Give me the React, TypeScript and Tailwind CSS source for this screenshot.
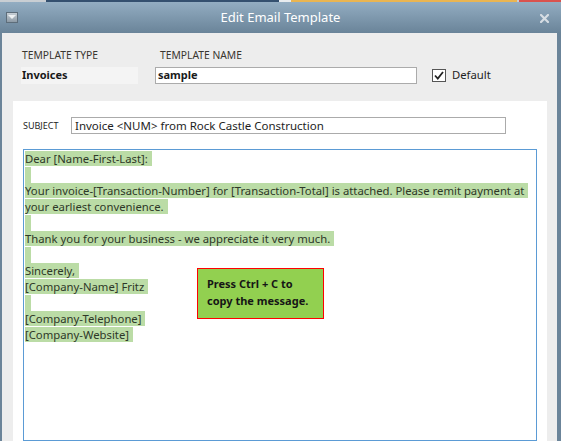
import React from 'react'

const ui = { fontFamily: '"Noto Sans", "Open Sans", Arial, sans-serif' }

// lines of the message body; '' marks an empty (highlighted newline) line
const lines = [
  'Dear [Name-First-Last]:',
  '',
  'Your invoice-[Transaction-Number] for [Transaction-Total] is attached. Please remit payment at',
  'your earliest convenience.',
  '',
  'Thank you for your business - we appreciate it very much.',
  '',
  'Sincerely,',
  '[Company-Name] Fritz',
  '',
  '[Company-Telephone]',
  '[Company-Website]',
]

export default function App() {
  return (
    <div className="flex h-[441px] w-[561px] flex-col overflow-hidden bg-[#6b8499]" style={ui}>
      {/* background app strip peeking above the dialog */}
      <div className="flex h-[2px] flex-shrink-0">
        <div className="w-[46px] bg-[#c9ced3]" />
        <div className="w-[233px] bg-[#34506f]" />
        <div className="w-[12px] bg-[#e8ecef]" />
        <div className="w-[226px] bg-[#eab552]" />
        <div className="w-[2px] bg-[#c9ced3]" />
        <div className="flex-1 bg-[#d9534f]" />
      </div>

      {/* title bar */}
      <div className="relative flex h-[31px] flex-shrink-0 items-center justify-center bg-gradient-to-b from-[#93adc2] to-[#6a8499]">
        <div className="absolute left-[6px] top-[10px] flex h-[11px] w-[12px] items-start justify-center border border-[#5d6d7a] bg-gradient-to-b from-[#c7cfd6] to-[#8d9aa5]">
          <div className="mt-[2px] h-[4px] w-[8px] bg-[#eef1f3]" style={{ clipPath: 'polygon(0 0, 100% 0, 50% 100%)' }} />
        </div>
        <span className="text-[13px] leading-none text-white">Edit Email Template</span>
        <svg className="absolute left-[540px] top-[12px]" width="9" height="9" viewBox="0 0 9 9">
          <path d="M1 1 L8 8 M8 1 L1 8" stroke="#d6dde3" strokeWidth="2.2" strokeLinecap="square" />
        </svg>
      </div>

      {/* dialog body */}
      <div className="ml-[2px] mr-[4px] flex flex-1 flex-col bg-[#ededed]">
        <div className="mt-[16px] flex h-[12px] items-center text-[10.3px] uppercase leading-none text-[#3a3630]">
          <span className="ml-[20px] w-[138px]">Template Type</span>
          <span>Template Name</span>
        </div>

        <div className="mt-[6px] flex h-[17px] items-center">
          <div className="ml-[19px] flex h-[17px] w-[117px] items-center bg-[#f4f4f4] pl-[1px] text-[11px] font-bold text-[#1a1a1a]">
            Invoices
          </div>
          <div className="ml-[17px] flex h-[17px] w-[262px] items-center border border-[#ababab] bg-white pl-[2px] text-[11px] font-bold text-[#1a1a1a]">
            sample
          </div>
          <div className="ml-[15px] flex h-[13px] w-[14px] items-center justify-center border border-[#555] bg-white">
            <svg width="10" height="9" viewBox="0 0 10 9">
              <path d="M1 4.5 L3.8 7.5 L9 1" fill="none" stroke="#222" strokeWidth="1.8" />
            </svg>
          </div>
          <span className="ml-[6px] text-[11.3px] text-[#1e1e1e]">Default</span>
        </div>

        {/* white panel */}
        <div className="ml-[11px] mt-[17px] flex w-[534px] flex-1 flex-col bg-white">
          <div className="mt-[16px] flex h-[17px] items-center">
            <span className="ml-[10px] w-[48px] text-[9px] uppercase text-[#1e1e1e]">Subject</span>
            <div className="flex h-[17px] w-[435px] items-center border border-[#ababab] pl-[3px] text-[11.5px] text-[#1e1e1e]">
              Invoice &lt;NUM&gt; from Rock Castle Construction
            </div>
          </div>

          {/* message area */}
          <div className="relative ml-[10px] mt-[15px] w-[514px] flex-1 border border-[#5b9bd5] pl-[1px] pt-[1px] text-[11.3px] leading-4 text-[#2e3828]">
            {lines.map((line, i) => (
              <div key={i} className="h-4 whitespace-nowrap">
                {line ? (
                  <span className="bg-[#bbdca6] pr-[4px]">{line}</span>
                ) : (
                  <span className="inline-block h-4 w-[6px] bg-[#bbdca6] align-top" />
                )}
              </div>
            ))}

            {/* callout over the message */}
            <div className="absolute left-[173px] top-[118px] h-[51px] w-[127px] border border-[#ff0000] bg-[#92d050] pl-[9px] pt-[6px] text-[11px] font-bold leading-[17px] text-[#161616]">
              Press Ctrl + C to
              <br />
              copy the message.
            </div>
          </div>
        </div>
      </div>
    </div>
  )
}
